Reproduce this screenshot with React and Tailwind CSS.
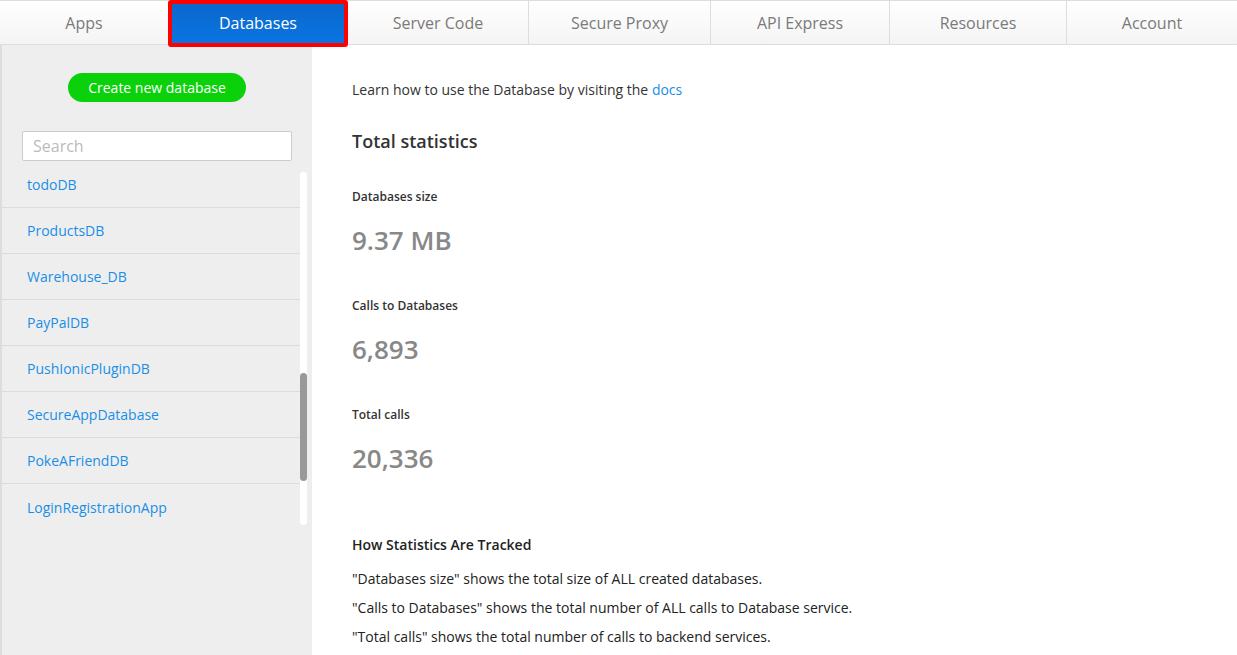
import React from "react";

const tabs = [
  { label: "Apps", w: "w-[168px]" },
  { label: "Databases", w: "w-[180px]", active: true },
  { label: "Server Code", w: "w-[180px]" },
  { label: "Secure Proxy", w: "w-[182px]", divider: true },
  { label: "API Express", w: "w-[179px]", divider: true },
  { label: "Resources", w: "w-[177px]", divider: true },
  { label: "Account", w: "w-[171px]", divider: true },
];

const dbs = [
  "todoDB",
  "ProductsDB",
  "Warehouse_DB",
  "PayPalDB",
  "PushIonicPluginDB",
  "SecureAppDatabase",
  "PokeAFriendDB",
  "LoginRegistrationApp",
];

const stats = [
  { label: "Databases size", value: "9.37 MB" },
  { label: "Calls to Databases", value: "6,893" },
  { label: "Total calls", value: "20,336" },
];

/* top nav */
const Nav = () => (
  <div className="flex h-[45px] shrink-0 border-t border-b border-[#dddddd] bg-[linear-gradient(180deg,#ffffff_0%,#f4f4f4_100%)]">
    {tabs.map((t) =>
      t.active ? (
        <div key={t.label} className={`${t.w} relative z-10 -mt-px h-[47px] shrink-0`}>
          <div className="flex h-full items-center justify-center rounded-[3px] border-[4px] border-[#ff0000] bg-[linear-gradient(180deg,#0a68cc_0%,#0a74e2_100%)] pb-px text-[16px] text-white">
            {t.label}
          </div>
        </div>
      ) : (
        <div
          key={t.label}
          className={`${t.w} flex shrink-0 items-center justify-center text-[16px] text-[#7a7a7a] ${
            t.divider ? "border-l border-[#dddddd]" : ""
          }`}
        >
          {t.label}
        </div>
      )
    )}
  </div>
);

/* left sidebar */
const Sidebar = () => (
  <div className="relative flex w-[312px] shrink-0 flex-col border-l-2 border-[#dddddd] bg-[#eeeeee]">
    <div className="mt-[28px] flex justify-center">
      <button className="h-[29px] w-[178px] rounded-full bg-[#0ad10a] text-[14px] text-white">
        Create new database
      </button>
    </div>
    <div className="mx-[20px] mt-[29px]">
      <input
        placeholder="Search"
        className="h-[30px] w-full rounded-[2px] border border-[#cccccc] bg-white px-[10px] text-[16px] outline-none placeholder:text-[#bbbbbb]"
      />
    </div>
    <div className="mt-px w-[298px]">
      {dbs.map((d) => (
        <div
          key={d}
          className="flex h-[46px] items-center border-b border-[#dcdcdc] pl-[25px] text-[14px] text-[#1a8ee6] last:border-b-0"
        >
          {d}
        </div>
      ))}
    </div>
    {/* scrollbar overlay */}
    <div className="absolute left-[298px] top-[127px] h-[353px] w-[7px] rounded-full bg-white">
      <div className="mt-[201px] h-[108px] w-full rounded-full bg-[#999999]" />
    </div>
  </div>
);

/* main panel */
const Main = () => (
  <div className="flex-1 bg-white pl-[40px] pt-[35px] text-[#333333]">
    <p className="text-[14px] leading-[20px]">
      Learn how to use the Database by visiting the{" "}
      <a className="text-[#1a8ee6]">docs</a>
    </p>
    <h2 className="mt-[28px] text-[18px] font-semibold leading-[26px]">Total statistics</h2>
    {stats.map((s, i) => (
      <div key={s.label} className={i === 0 ? "mt-[34px]" : "mt-[42px]"}>
        <p className="text-[12px] font-semibold leading-[17px] text-[#333333]">{s.label}</p>
        <p className="mt-[20px] text-[26px] font-semibold leading-[30px] text-[#888888]">{s.value}</p>
      </div>
    ))}
    <h3 className="mt-[62px] text-[14px] font-semibold leading-[19px] text-[#222222]">
      How Statistics Are Tracked
    </h3>
    <div className="mt-[15px] flex flex-col gap-[9px] text-[14px] leading-[20px] text-[#222222]">
      <p>"Databases size" shows the total size of ALL created databases.</p>
      <p>"Calls to Databases" shows the total number of ALL calls to Database service.</p>
      <p>"Total calls" shows the total number of calls to backend services.</p>
    </div>
  </div>
);

export default function App() {
  return (
    <div className="flex h-[655px] w-[1237px] flex-col overflow-hidden bg-white font-['Open_Sans',sans-serif]">
      <Nav />
      <div className="flex flex-1">
        <Sidebar />
        <Main />
      </div>
    </div>
  );
}
